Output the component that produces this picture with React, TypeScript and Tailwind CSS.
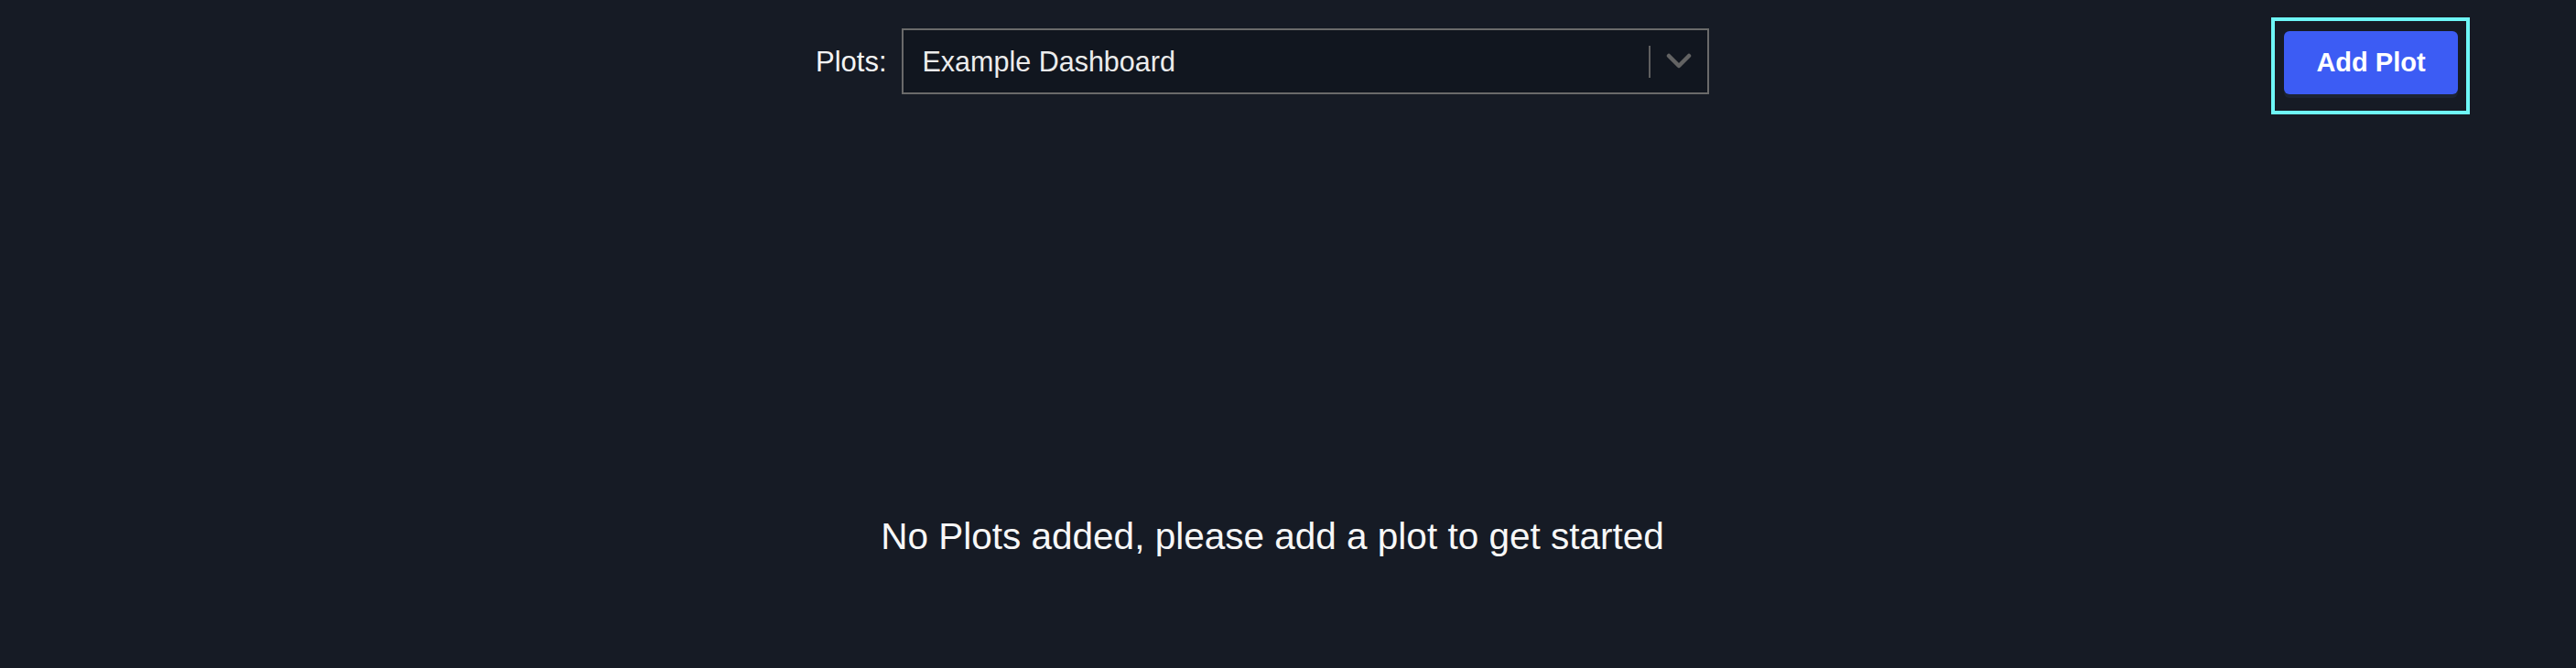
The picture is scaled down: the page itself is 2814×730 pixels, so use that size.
import React from "react";

export default function App() {
  return (
    <div
      className="w-full h-[730px] bg-[#161b25] text-[#f2f2f2] overflow-hidden"
      style={{ fontFamily: '"Liberation Sans", Arial, sans-serif' }}
    >
      <div className="flex items-start pl-[891px] pr-[116px]">
        <div className="flex items-center gap-[16px] mt-[31px]">
          <span className="text-[31px] leading-none text-[#f4f4f4]">Plots:</span>
          <div className="w-[882px] h-[72px] border-2 border-[#6a6a6a] bg-[#11161f] flex items-center">
            <span className="flex-1 pl-[21px] text-[30.5px] leading-none text-[#ececec]">
              Example Dashboard
            </span>
            <div className="w-[2px] h-[35px] bg-[#5f5f5f]" />
            <div className="w-[62px] flex items-center justify-center">
              <svg width="28" height="18" viewBox="0 0 28 18" fill="none">
                <path
                  d="M3 3 L14 14 L25 3"
                  stroke="#636363"
                  strokeWidth="4.5"
                  strokeLinecap="round"
                  strokeLinejoin="round"
                />
              </svg>
            </div>
          </div>
        </div>
        <div className="ml-auto mt-[19px] border-4 border-[#6ef7f7] pl-[10px] pr-[9px] pt-[11px] pb-[18px]">
          <button className="w-[190px] h-[69px] rounded-[6px] bg-[#3c5cf4] text-white font-bold text-[29px] leading-none shadow-[0_4px_0_#1c2433] flex items-center justify-center">
            Add Plot
          </button>
        </div>
      </div>
      <div className="flex justify-center pr-[34px] mt-[438px]">
        <p className="text-[40.5px] leading-[46px] text-[#f7f7f7]">
          No Plots added, please add a plot to get started
        </p>
      </div>
    </div>
  );
}
